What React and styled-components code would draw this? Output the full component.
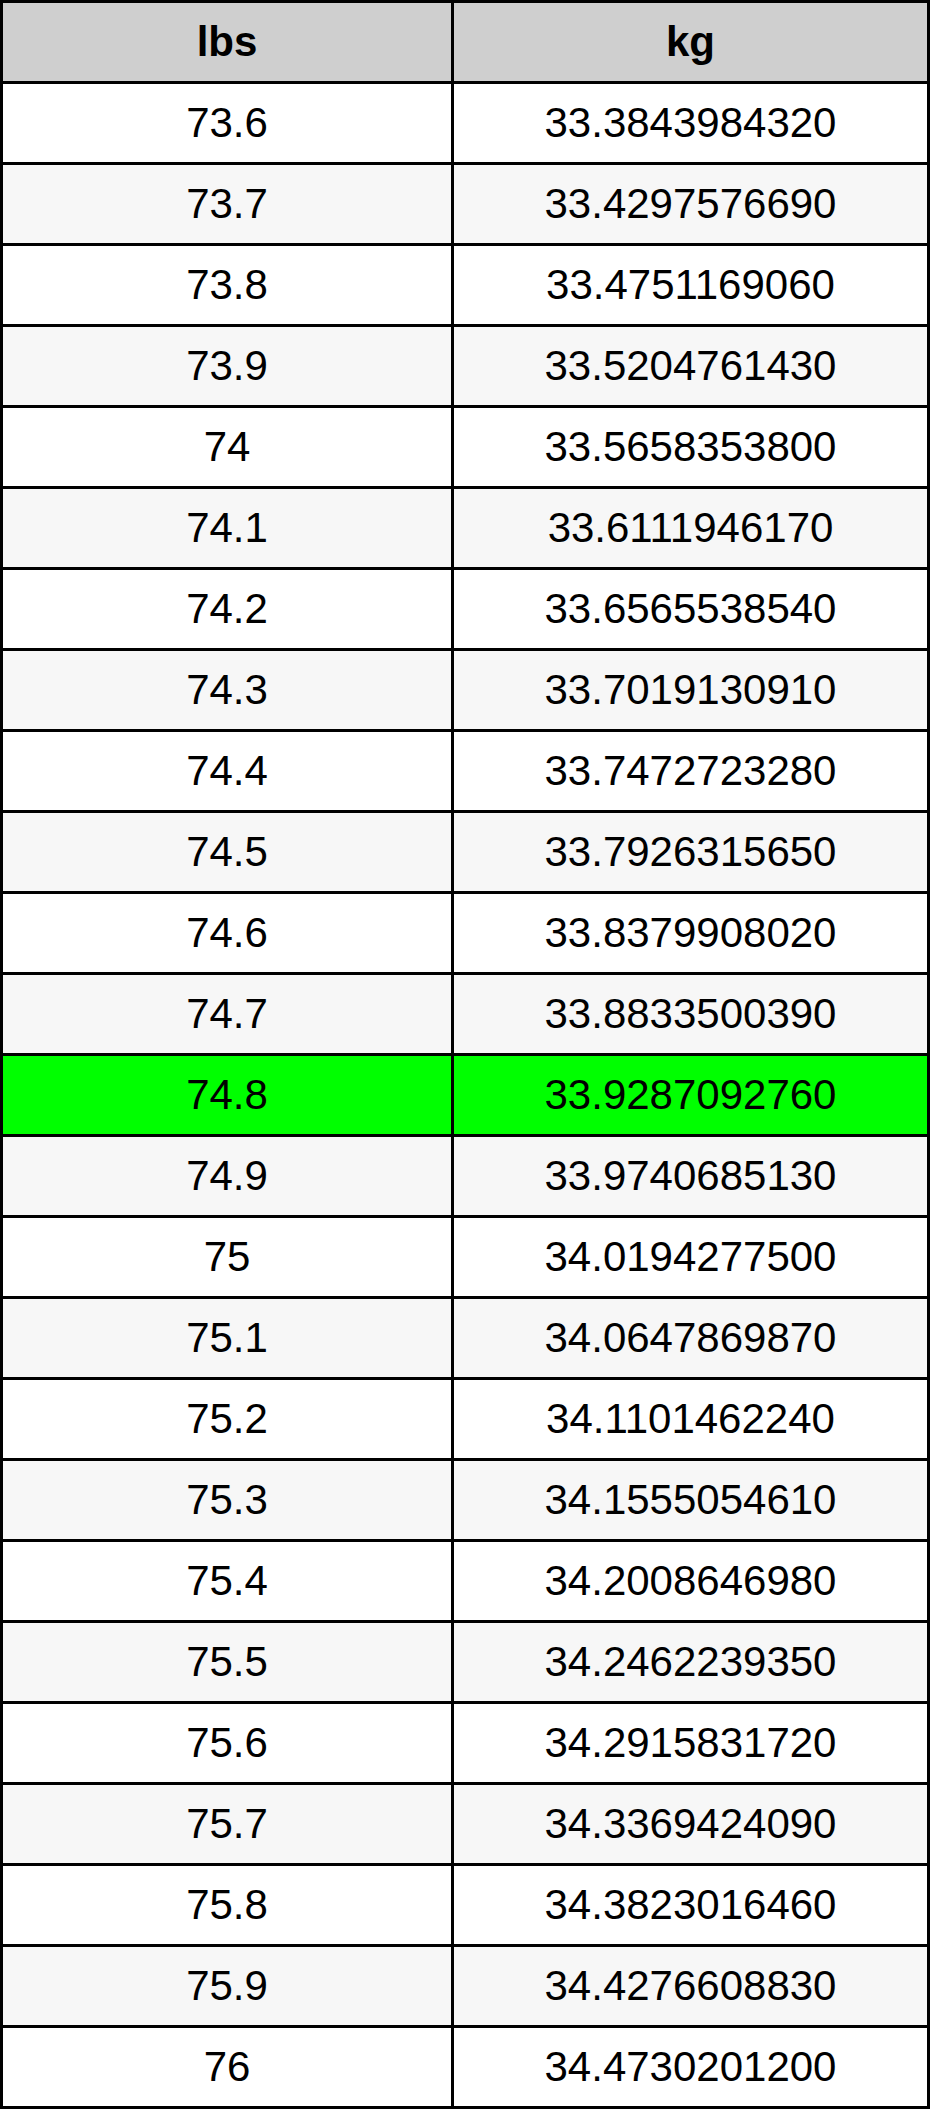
import React from "react";
import styled, { createGlobalStyle } from "styled-components";

const GlobalStyle = createGlobalStyle`
  html, body {
    margin: 0;
    padding: 0;
    background: #ffffff;
  }
  body {
    font-family: "Liberation Sans", Arial, Helvetica, sans-serif;
  }
`;

const Table = styled.div`
  display: grid;
  grid-template-columns: 448px 473px;
  gap: 3px;
  padding: 3px;
  background: #000000;
  width: 930px;
  box-sizing: border-box;
`;

const Cell = styled.div`
  height: 78px;
  display: flex;
  align-items: center;
  justify-content: center;
  font-size: 42px;
  color: #000000;
  font-weight: ${(p) => (p.$head ? 700 : 400)};
  background: ${(p) =>
    p.$head ? "#cfcfcf" : p.$hl ? "#00ff00" : p.$alt ? "#f7f7f7" : "#ffffff"};
`;

const rows = [
  ["73.6", "33.3843984320"],
  ["73.7", "33.4297576690"],
  ["73.8", "33.4751169060"],
  ["73.9", "33.5204761430"],
  ["74", "33.5658353800"],
  ["74.1", "33.6111946170"],
  ["74.2", "33.6565538540"],
  ["74.3", "33.7019130910"],
  ["74.4", "33.7472723280"],
  ["74.5", "33.7926315650"],
  ["74.6", "33.8379908020"],
  ["74.7", "33.8833500390"],
  ["74.8", "33.9287092760"],
  ["74.9", "33.9740685130"],
  ["75", "34.0194277500"],
  ["75.1", "34.0647869870"],
  ["75.2", "34.1101462240"],
  ["75.3", "34.1555054610"],
  ["75.4", "34.2008646980"],
  ["75.5", "34.2462239350"],
  ["75.6", "34.2915831720"],
  ["75.7", "34.3369424090"],
  ["75.8", "34.3823016460"],
  ["75.9", "34.4276608830"],
  ["76", "34.4730201200"],
];

export default function App() {
  return (
    <>
      <GlobalStyle />
      <Table>
        <Cell $head>lbs</Cell>
        <Cell $head>kg</Cell>
        {rows.map(([lbs, kg], i) => {
          const hl = lbs === "74.8";
          const alt = i % 2 === 1;
          return (
            <React.Fragment key={lbs}>
              <Cell $hl={hl} $alt={alt}>{lbs}</Cell>
              <Cell $hl={hl} $alt={alt}>{kg}</Cell>
            </React.Fragment>
          );
        })}
      </Table>
    </>
  );
}
